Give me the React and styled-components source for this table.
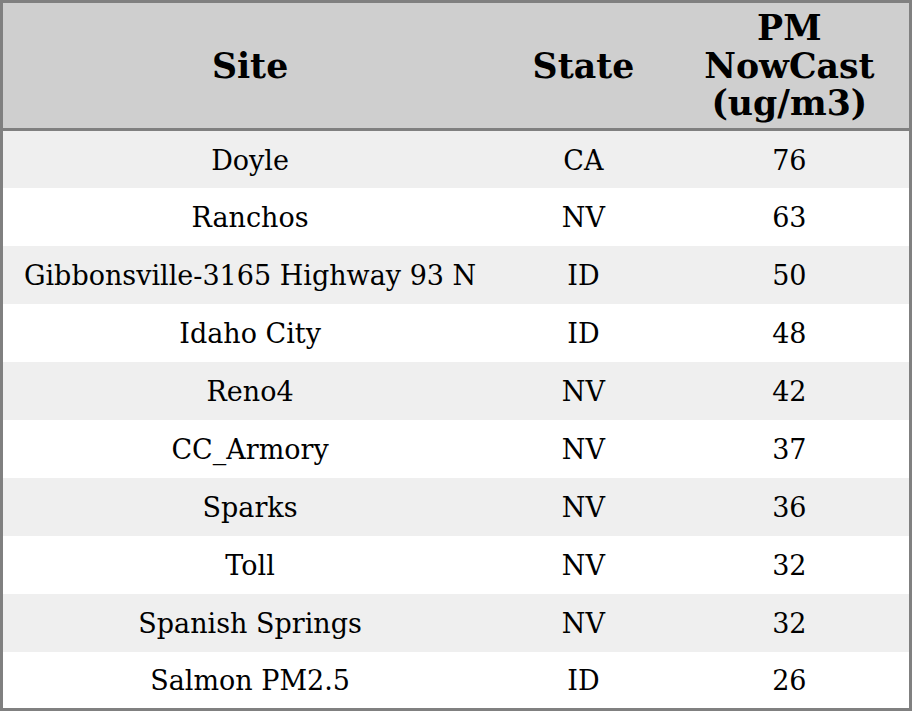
import React from "react";
import styled, { createGlobalStyle } from "styled-components";

const GlobalStyle = createGlobalStyle`
  html, body {
    margin: 0;
    padding: 0;
    background: #ffffff;
  }
`;

const Table = styled.table`
  width: 912px;
  border-collapse: collapse;
  border: 3px solid #808080;
  font-family: "DejaVu Serif", serif;
  color: #000;
  table-layout: fixed;
`;

const HeadRow = styled.tr`
  height: 128px;
`;

const HeadCell = styled.th`
  width: ${({ w }) => w}px;
  box-sizing: border-box;
  padding: 0 4px;
  background: #cfcfcf;
  border-bottom: 3px solid #808080;
  font-size: 34.7px;
  font-weight: bold;
  line-height: 37.5px;
  text-align: center;
  vertical-align: middle;
`;

const Row = styled.tr`
  height: 58px;
  background: ${({ striped }) => (striped ? "#efefef" : "#ffffff")};
`;

const Cell = styled.td`
  box-sizing: border-box;
  padding: 2px 4px 0;
  font-size: 27px;
  line-height: 31px;
  text-align: center;
  vertical-align: middle;
  white-space: nowrap;
`;

const rows = [
  ["Doyle", "CA", 76],
  ["Ranchos", "NV", 63],
  ["Gibbonsville-3165 Highway 93 N", "ID", 50],
  ["Idaho City", "ID", 48],
  ["Reno4", "NV", 42],
  ["CC_Armory", "NV", 37],
  ["Sparks", "NV", 36],
  ["Toll", "NV", 32],
  ["Spanish Springs", "NV", 32],
  ["Salmon PM2.5", "ID", 26],
];

export default function App() {
  return (
    <>
      <GlobalStyle />
      <Table>
        <thead>
          <HeadRow>
            <HeadCell w={494}>Site</HeadCell>
            <HeadCell w={172}>State</HeadCell>
            <HeadCell w={240}>
              PM
              <br />
              NowCast
              <br />
              (ug/m3)
            </HeadCell>
          </HeadRow>
        </thead>
        <tbody>
          {rows.map(([site, state, pm], i) => (
            <Row key={site} striped={i % 2 === 0}>
              <Cell>{site}</Cell>
              <Cell>{state}</Cell>
              <Cell>{pm}</Cell>
            </Row>
          ))}
        </tbody>
      </Table>
    </>
  );
}
